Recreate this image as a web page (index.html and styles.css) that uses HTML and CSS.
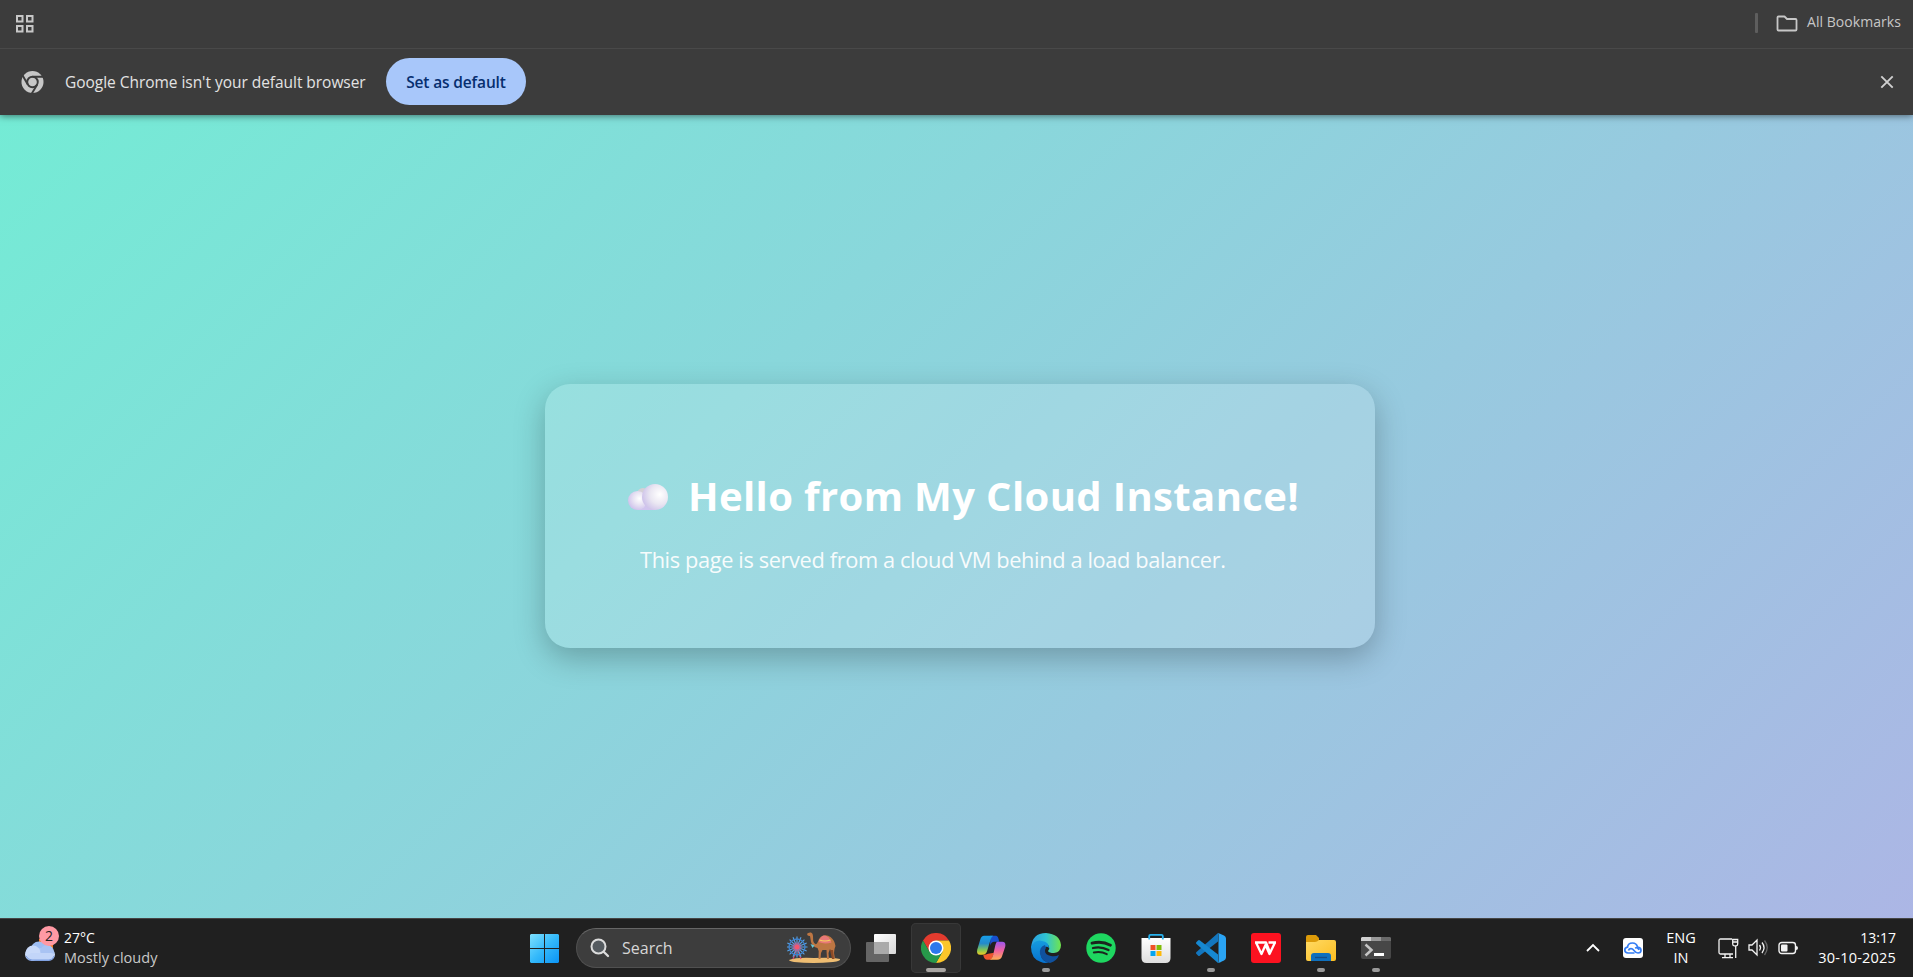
FILE: index.html
```html
<!DOCTYPE html>
<html lang="en">
<head>
<meta charset="utf-8">
<title>Hello from My Cloud Instance</title>
<link rel="stylesheet" href="styles.css">
</head>
<body>
<header class="bookmarks">
  <svg class="apps" width="20" height="20" viewBox="0 0 20 20" fill="none" stroke="#c7c7c7" stroke-width="2"><path d="M2 2h5.500v5.500h-5.500zM12 2h5.500v5.500h-5.500zM2 12h5.500v5.500h-5.500zM12 12h5.500v5.500h-5.500z"/></svg>
  <div class="all-bookmarks">
    <span class="divider"></span>
    <svg width="22" height="17" viewBox="0 0 22 17" fill="none" stroke="#c7c7c7" stroke-width="1.8" stroke-linejoin="round"><path d="M1.500 2.500q0-1 1-1h6l2.500 2.500h8.500q1 0 1 1v9.500q0 1-1 1h-17q-1 0-1-1z"/></svg>
    <span class="label">All Bookmarks</span>
  </div>
</header>
<section class="infobar">
  <svg class="mark" width="23" height="24" viewBox="0 0 24 24"><circle cx="12" cy="12" r="11.500" fill="#c7c7c7"/><circle cx="12" cy="12" r="5.500" fill="none" stroke="#3c3c3c" stroke-width="2"/><path d="M12 6.500h11M7.200 14.800L1.700 5.300M16.800 14.800L11.300 24" stroke="#3c3c3c" stroke-width="2" fill="none"/></svg>
  <span class="message">Google Chrome isn't your default browser</span>
  <button class="set-default">Set as default</button>
  <svg class="close" width="14" height="14" viewBox="0 0 14 14" stroke="#d0d0d0" stroke-width="1.900"><path d="M1.300 1.300l11.400 11.400M12.700 1.300L1.300 12.700"/></svg>
</section>
<main class="page">
  <article class="card">
    <h1><svg class="cloud" width="40" height="27" viewBox="0 0 40 27">
      <defs>
        <radialGradient id="c1" cx=".68" cy=".4" r=".68"><stop offset="0" stop-color="#fff"/><stop offset=".55" stop-color="#eae7f2"/><stop offset="1" stop-color="#cfc4ea"/></radialGradient>
        <radialGradient id="c2" cx=".6" cy=".4" r=".65"><stop offset="0" stop-color="#fff"/><stop offset=".5" stop-color="#e8e3f3"/><stop offset="1" stop-color="#cdc0ec"/></radialGradient>
      </defs>
      <circle cx="15" cy="10" r="6" fill="#d4d0d6"/><path d="M10 16h18v10H10z" fill="#d0c4ee"/><circle cx="9.500" cy="16.500" r="9.500" fill="url(#c2)"/><circle cx="27" cy="13" r="13" fill="url(#c1)"/></svg><span>Hello from My Cloud Instance!</span></h1>
    <p>This page is served from a cloud VM behind a load balancer.</p>
  </article>
</main>
<footer class="taskbar">
  <div class="weather">
    <div class="weather-icon">
      <svg width="31" height="36" viewBox="0 0 31 36"><defs><linearGradient id="w" x2="0" y2="1"><stop offset="0" stop-color="#a9c5f7"/><stop offset=".55" stop-color="#cfdef9"/><stop offset="1" stop-color="#7fa2e4"/></linearGradient></defs><path d="M14 13h14v9H14z" fill="#f47a1c"/><circle cx="14" cy="24" r="8.500" fill="#9dbdf3"/><rect y="22" width="30" height="13" rx="6.500" fill="url(#w)"/><circle cx="22" cy="26" r="7" fill="#a9c3f3"/><circle cx="8" cy="27" r="7.500" fill="#c9dafa"/><path d="M6 27h20q3 0 3 3t-4 4H7q-5 0-6-4z" fill="#c2d5f9"/><path d="M1 30q2 4 6 4h17q4 0 5-4" fill="none" stroke="#7c9ee0"/></svg>
      <span class="badge">2</span>
    </div>
    <div class="weather-text"><span class="temp">27°C</span><span class="cond">Mostly cloudy</span></div>
  </div>
  <nav class="apps-row">
    <div class="slot start"><svg width="29" height="29" viewBox="0 0 29 29"><defs><linearGradient id="win" gradientUnits="userSpaceOnUse" x1="0" y1="0" x2="29" y2="29"><stop offset="0" stop-color="#7ee0ff"/><stop offset=".5" stop-color="#34b9fa"/><stop offset="1" stop-color="#0a93f5"/></linearGradient></defs><path d="M1 0h13v14H0V1zM15 0h13l1 1v13H15zM0 15h14v14H1l-1-1zM15 15h14v13l-1 1H15z" fill="url(#win)"/></svg></div>
    <div class="search">
      <svg width="20" height="20" viewBox="0 0 20 20" fill="none" stroke="#dcdcdc" stroke-linecap="round"><circle cx="8.500" cy="8.500" r="7" stroke-width="2" fill="#555b60"/><path d="M13.700 13.700l4.300 4.300" stroke-width="2.300"/></svg>
      <span>Search</span>
      <svg class="camel" width="54" height="32" viewBox="0 0 54 32">
        <path d="M2 28q8-3 25-2 18-1 26 1 1 2-7 3-20 2-39 0-5-1-5-2z" fill="#eebd72"/>
        <path d="M10 16L6 27M10 16l4 11" stroke="#d94c73" stroke-width="1.200"/>
        <g stroke="#58a4e6" stroke-width="1.100"><path d="M10 4.500v21M-.5 15h21M2.600 7.600l14.800 14.800M17.400 7.600L2.600 22.400M6 5.300l8 19.400M14 5.300L6 24.700M.3 11l19.400 8M19.700 11L.3 19"/><circle cx="10" cy="15" r="8" fill="none" stroke="#3f83d0" stroke-width="1.300"/></g><circle cx="10" cy="15" r="4.500" fill="#b05f8e" opacity=".7"/><circle cx="10" cy="15" r="2.500" fill="#f4566f"/>
        <path d="M19.500 2.200Q21.500 0 24 .5q2 .5 2 3.500l.2 5q.8 3 2.600 3.200 1.200-.2 2.200-2.700 1.500-5 5.500-6 4-.8 7 1.500 4 3 5 9l-1 3-.5 4 1 6h-2l-1.500-7-1.500-3-1.500 4 .5 6h-2l-.5-9h-4l-1.500 3-.5 6h-2l.2-8-1.200-3q-5-1-6.500-6l-1-6q-2.500.5-3-2z" fill="#bd7643"/>
        <path d="M31.500 10q2-6 5.500-6.500 5 0 7.500 7-7 2-13-.5z" fill="#e87878"/><path d="M32.500 8q5 2 11 0" stroke="#f7d35f" stroke-width="1.200" fill="none"/><path d="M23.500 12l4 1.500-2 2.500z" fill="#67c8d7"/><path d="M46 18l1 9h-2l-2-9z" fill="#8e4b26"/>
      </svg>
    </div>
    <div class="slot"><svg width="30" height="30" viewBox="0 0 30 30"><defs><linearGradient id="tv" x2="1" y2="1"><stop offset="0" stop-color="#fff"/><stop offset="1" stop-color="#d8d8d8"/></linearGradient></defs><rect x="8" y="1" width="22" height="20" rx="1" fill="url(#tv)"/><rect y="9" width="23" height="20" rx="1" fill="#777" opacity=".8"/><rect x="8" y="9" width="15" height="12" fill="#aaa"/></svg></div>
    <div class="slot active"><svg width="30" height="30" viewBox="0 0 30 30"><path d="M2 7.500A15 15 0 0 1 28 7.500H15L8.500 18.800z" fill="#e33b2e"/><path d="M28 7.500A15 15 0 0 1 15 30l6.500-11.300L15 7.500z" fill="#fcc629"/><path d="M2 7.500A15 15 0 0 0 15 30l6.500-11.300H8.500z" fill="#27994a"/><circle cx="15" cy="15" r="7.500" fill="#fff"/><circle cx="15" cy="15" r="6" fill="#2c78ec"/></svg><i class="run wide"></i></div>
    <div class="slot"><svg width="30" height="30" viewBox="0 0 30 30"><defs><linearGradient id="cp1" x2="0" y2="1"><stop offset="0" stop-color="#179fe9"/><stop offset=".4" stop-color="#238acb"/><stop offset=".75" stop-color="#83c653"/><stop offset="1" stop-color="#f2ca22"/></linearGradient><linearGradient id="cp2" x2="0" y2="1"><stop offset="0" stop-color="#9d56ee"/><stop offset=".5" stop-color="#f0629f"/><stop offset="1" stop-color="#ffae53"/></linearGradient></defs><g transform="translate(1.200 .8)"><path d="M13 2h6q2 0 3 6h-5q-3 0-4 4z" fill="#1750cf"/><path d="M6 21q3 0 5-1l6-1-3 7h-4q-3 0-4-5z" fill="#ef562f"/><path d="M7 2h9q-2 1-3 5l-3 10q-1 4-5 4H3q-4 0-3-5L3 6q1-4 4-4z" fill="url(#cp1)"/><path d="M20 8h5q4 0 3 5l-3 9q-1 4-5 4h-7q2-1 3-5l2-9q1-4 2-4z" fill="url(#cp2)"/></g></svg></div>
    <div class="slot"><svg width="30" height="30" viewBox="0 0 30 30"><defs><linearGradient id="e1"><stop offset="0" stop-color="#299ee3"/><stop offset=".5" stop-color="#2fc3d2"/><stop offset="1" stop-color="#70e44c"/></linearGradient><linearGradient id="e2" x2="0" y2="1"><stop offset="0" stop-color="#159bdf"/><stop offset="1" stop-color="#0872cf"/></linearGradient></defs><path d="M0 15Q1 0 15 0q14 1 15 12 0 7-7 8-5 0-6-2 2-2 1-4-1-4-6-5Q3 8 0 15z" fill="url(#e1)"/><path d="M0 14q4-8 11-6 7 1 7 7-2-2-4-1-5 2-4 8 1 7 8 7-4 2-8 0Q0 26 0 14z" fill="url(#e2)"/><path d="M14 12q-6 2-5 9 2 8 10 9 7-2 9-8-4 2-8 1-6-1-6-5 0-2 1-3z" fill="#10519d"/></svg><i class="run"></i></div>
    <div class="slot"><svg width="30" height="30" viewBox="0 0 30 30" fill="none" stroke="#1b241e" stroke-linecap="round"><circle cx="15" cy="15" r="14.700" fill="#1ed760" stroke="none"/><path d="M6 10.200q10-2.600 18.500 2" stroke-width="2.800"/><path d="M7 15q8-2 15.500 2" stroke-width="2.300"/><path d="M7.800 19.500q7-1.700 13 1.700" stroke-width="1.900"/></svg></div>
    <div class="slot"><svg width="30" height="30" viewBox="0 0 30 30"><defs><linearGradient id="st" x2="0" y2="1"><stop offset="0" stop-color="#fff"/><stop offset="1" stop-color="#dedede"/></linearGradient></defs><path d="M.5 5h29v20q0 5-5 5h-19q-5 0-5-5z" fill="url(#st)"/><path d="M8.200 6.500V3q0-1.200 1.300-1.200h11q1.300 0 1.300 1.200v3.500" fill="none" stroke="#28b2ee" stroke-width="1.800"/><path d="M9.500 12h5v5h-5z" fill="#f05126"/><path d="M15.500 12h5v5h-5z" fill="#80bc06"/><path d="M9.500 18h5v5h-5z" fill="#05a5ef"/><path d="M15.500 18h5v5h-5z" fill="#fdb90a"/></svg></div>
    <div class="slot"><svg width="30" height="30" viewBox="0 0 30 30"><path d="M22 8.500L4 22.500q-1 1-2 0l-1.500-1.500q-1-1 0-2L22 0z" fill="#1376be"/><path d="M22 21.500L4 7.500q-1-1-2 0L.5 9q-1 1 0 2L22 30z" fill="#1688d1"/><path d="M22 0q1 0 6 2.500 2 1 2 3v19q0 2-2 3Q23 30 22 30q.5-.5.500-2V2q0-1.500-.5-2z" fill="#2aa4f4"/></svg><i class="run"></i></div>
    <div class="slot"><svg width="30" height="30" viewBox="0 0 30 30"><rect width="30" height="30" rx="3" fill="#fc1220"/><path d="M4 9.500h7.500M5 9.500l5.500 11.500 4-9 4 9 5.500-11.500M11 9.500h4l4 10M17.500 9.500H25" fill="none" stroke="#fff" stroke-width="2.300" stroke-linejoin="round"/></svg></div>
    <div class="slot"><svg width="30" height="30" viewBox="0 0 30 30"><defs><linearGradient id="fo" x2="1" y2="1"><stop offset="0" stop-color="#ffda64"/><stop offset="1" stop-color="#fbbd20"/></linearGradient></defs><path d="M0 4q0-2 2-2h8l3 3v4H0z" fill="#dc9b09"/><path d="M0 9h9q2 0 4-2h15q2 0 2 2v17q0 2-2 2H2q-2 0-2-2z" fill="url(#fo)"/><path d="M5 28v-5q0-3 3-3h14q3 0 3 3v5z" fill="#0f70bd"/><path d="M9 24.500h12" stroke="#164d86" stroke-width="1.300"/></svg><i class="run"></i></div>
    <div class="slot"><svg width="30" height="30" viewBox="0 0 30 30"><rect y="4" width="30" height="22" rx="2" fill="#474747"/><path d="M1 4h9v4H0V5z" fill="#d0d0d0"/><path d="M10 4h10v4H10z" fill="#989898"/><path d="M20 4h9l1 1v3H20z" fill="#696969"/><path d="M4.500 11.500l6 5.500-6 5.500" fill="none" stroke="#c5c5c5" stroke-width="2.500"/><path d="M13 21.500h10" stroke="#fff" stroke-width="3"/></svg><i class="run"></i></div>
  </nav>
  <div class="tray">
    <svg class="chev" width="14" height="10" viewBox="0 0 14 10" fill="none" stroke="#fff" stroke-width="1.800"><path d="M1 8l6-6 6 6"/></svg>
    <svg class="sync" width="20" height="20" viewBox="0 0 20 20" fill="none" stroke="#347df4" stroke-width="1.700"><rect width="20" height="20" rx="3" fill="#fff" stroke="none"/><path d="M11.500 15H5q-3.200 0-3.200-3 0-2.300 2.700-2.800Q5 5 9.500 5q4 0 5 4 3.500.5 3.500 3.300 0 2.700-3 2.700-2 0-4-2.500-1.500-1.800-3-1.800-2 0-2.500 1.800M12 10q3-1 4 2"/></svg>
    <div class="lang"><span>ENG</span><span>IN</span></div>
    <svg class="net" width="21" height="21" viewBox="0 0 21 21" fill="none" stroke="#f3f3f3" stroke-width="1.300"><path d="M14 1H2.500Q1 1 1 2.500v12Q1 16 2.500 16H15M7 16v3.500M12 16v3.500M4 19.700h11M14.700 1.500h5v4.500q0 1.800-1.500 1.800h-2q-1.500 0-1.500-1.800zM15 4h4.500M17.700 8v12"/></svg>
    <svg class="vol" width="21" height="20" viewBox="0 0 21 20" fill="none" stroke="#f3f3f3" stroke-width="1.300"><path d="M1 7h3l5-5v15l-5-5H1zM11.500 7q2 2.500 0 5.500M14 4.500q4 5 0 10.500"/><path d="M16.500 2.500q5.500 7 0 14.500" stroke="#666"/></svg>
    <svg class="bat" width="21" height="14" viewBox="0 0 21 14"><rect x="1" y="1.500" width="16.500" height="11" rx="2.700" fill="none" stroke="#f3f3f3" stroke-width="1.400"/><rect x="3" y="3.500" width="6.500" height="7" rx="1" fill="#f3f3f3"/><path d="M18 5q2 0 2 2t-2 2z" fill="#f3f3f3"/></svg>
    <div class="clock"><span>13:17</span><span class="date">30-10-2025</span></div>
  </div>
</footer>
</body>
</html>
```
FILE: styles.css
```css
* { box-sizing: border-box; }
body { margin: 0; height: 977px; display: flex; flex-direction: column; overflow: hidden; font-family: "Open Sans", "Noto Sans", sans-serif; font-size: 15px; }
svg { display: block; flex: none; }
span { white-space: nowrap; }
.bookmarks { position: relative; z-index: 2; height: 49px; flex: none; display: flex; align-items: flex-start; justify-content: space-between; background: #3c3c3c; border-bottom: 1px solid #494949; padding: 13px 11px 0 15px; }
.apps { margin-top: 1px; }
.all-bookmarks { display: flex; align-items: center; height: 20px; color: #c7c7c7; font-size: 14px; }
.divider { width: 3px; height: 20px; background: #5e5e5e; border-radius: 1px; margin-right: 18px; }
.all-bookmarks .label { margin-left: 9px; width: 95px; line-height: 18px; padding-bottom: 2px; letter-spacing: .05px; }
.infobar { position: relative; z-index: 1; height: 66px; flex: none; display: flex; align-items: center; background: #3c3c3c; padding: 0 19px 1px 21px; box-shadow: 0 1px 7px rgba(0,0,0,.5); }
.message { margin-left: 21px; width: 321px; color: #e3e3e3; font-size: 15.5px; letter-spacing: -.04px; }
.set-default { width: 140px; height: 47px; padding: 0; border: 0; border-radius: 24px; background: #a8c7fa; color: #062e6f; font: 600 15.5px "Open Sans", sans-serif; letter-spacing: -.15px; }
.close { margin-left: auto; }
.page { flex: none; height: 803px; display: flex; justify-content: center; padding-top: 269px; background: linear-gradient(135deg, #74ebd5, #acb6e5); }
.card { width: 830px; height: 264px; margin-left: 7px; padding: 85px 0 0 83px; border-radius: 25px; background: rgba(255,255,255,.15); box-shadow: 0 10px 31px rgba(0,0,0,.25); color: #fff; }
h1 { display: flex; align-items: center; margin: 0; height: 54px; font-size: 40px; line-height: 54px; font-weight: 700; letter-spacing: .38px; }
h1 span { margin-left: 20px; }
.cloud { margin-top: 2px; }
.card p { margin: 21px 0 0 12px; font-size: 21.8px; line-height: 32px; letter-spacing: -.38px; opacity: .92; }
.taskbar { height: 59px; flex: none; display: flex; align-items: center; background: #202020; border-top: 1px solid #454545; color: #fff; font-size: 14px; line-height: 20px; }
.weather { width: 517px; padding-left: 25px; display: flex; align-items: center; }
.weather-icon { position: relative; width: 39px; height: 36px; margin-top: -8px; }
.badge { position: absolute; left: 14px; top: 0; width: 20px; height: 20px; border-radius: 50%; background: #ff99a4; color: #222; text-align: center; font-size: 14px; line-height: 20px; }
.weather-text, .lang, .clock { display: flex; flex-direction: column; }
.cond { color: #c9c9c9; font-size: 14.5px; letter-spacing: .05px; }
.apps-row { display: flex; align-items: center; height: 100%; }
.slot { position: relative; width: 50px; height: 50px; margin-right: 5px; display: grid; place-items: center; flex: none; }
.start { width: 55px; margin-right: 4px; }
.active { background: #2d2d2d; border-radius: 5px; box-shadow: inset 0 0 0 1px #383838; }
.run { position: absolute; bottom: 1px; left: 21px; width: 8px; height: 4px; border-radius: 2px; background: #999; }
.run.wide { left: 15px; width: 20px; background: #a9a6a3; }
.search { width: 275px; height: 40px; margin-right: 5px; padding: 0 9px 0 13px; display: flex; align-items: center; border: 1px solid #505050; border-top-color: #666; border-radius: 20px; background: #3d3d3d; color: #d6d6d6; font-size: 16px; }
.search span { margin-left: 12px; }
.camel { margin-left: auto; }
.tray { margin-left: auto; display: flex; align-items: center; padding-right: 17px; }
.sync { margin-left: 23px; }
.lang { width: 46px; margin-left: 15px; text-align: center; font-size: 14.5px; }
.net { margin-left: 14px; }
.vol { margin-left: 9px; }
.bat { margin-left: 9px; }
.clock { width: 97px; text-align: right; }
.date { font-size: 14.5px; letter-spacing: .2px; }
```
